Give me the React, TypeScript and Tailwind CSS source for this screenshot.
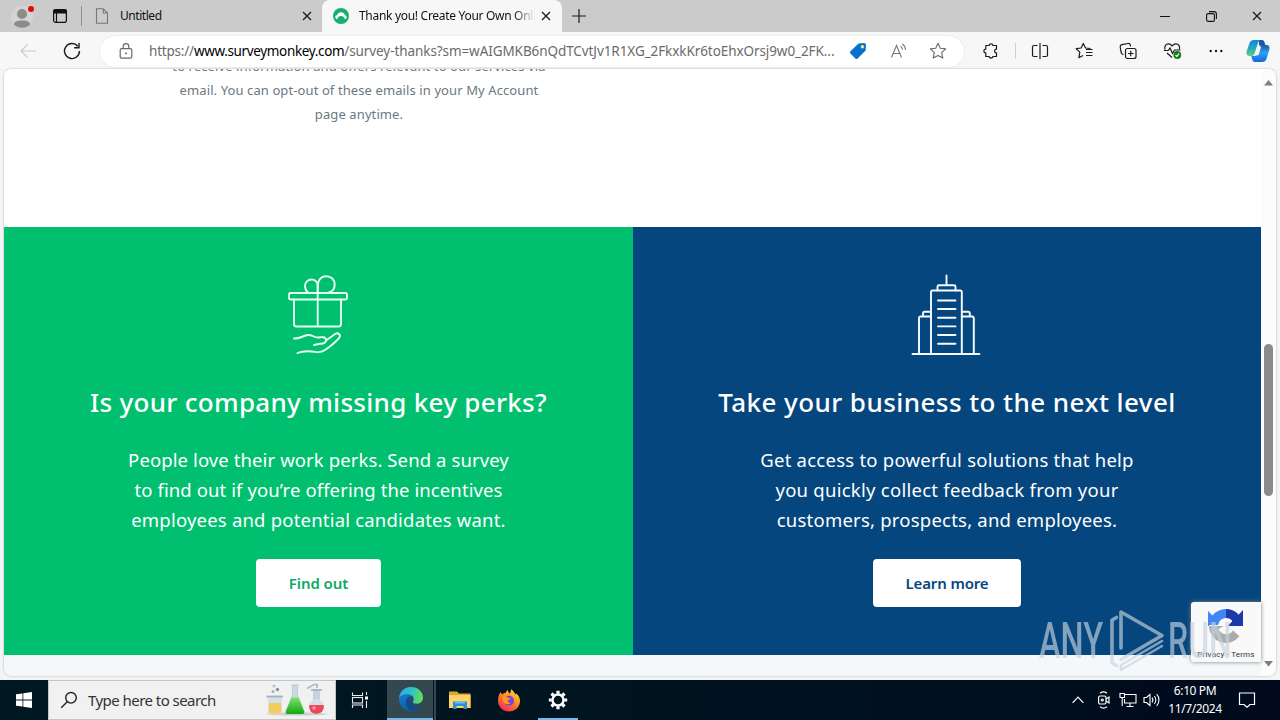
import React, { ReactNode } from 'react';

interface IconProps {
    className?: string;
}

/* ---------- Browser chrome icons ---------- */

const ProfileIcon = () => (
    <svg width="24" height="26" viewBox="0 0 24 26">
        <circle cx="12" cy="14" r="11" fill="#d4d4d4" />
        <circle cx="12" cy="11" r="5" fill="#8e8b88" />
        <path d="M4 21.500c0-3 3-4 8-4s8 1 8 4c-2 2.400-5 3.200-8 3.200s-6-.8-8-3.200z" fill="#8e8b88" />
        <circle cx="21" cy="6" r="3" fill="#e00b0b" />
    </svg>
);

const TabActionsIcon = () => (
    <svg width="16" height="16" viewBox="0 0 16 16" fill="none" stroke="#111" strokeWidth="1.200">
        <rect x="1.600" y="1.600" width="12.800" height="12.800" rx="2.200" />
        <path d="M2 2h12v3H2z" fill="#111" />
        <path d="M4.500 5v9" />
    </svg>
);

const PageIcon = () => (
    <svg width="14" height="16" viewBox="0 0 14 16" fill="none" stroke="#777" strokeWidth="1.100">
        <path d="M1.500.8h6.800l4.200 4.200v10.200h-11zM8.300.8V5h4.200" />
    </svg>
);

const CloseIcon = ({ className }: IconProps) => (
    <svg className={className} width="10" height="10" viewBox="0 0 10 10" stroke="#1b1b1b" strokeWidth="1.300">
        <path d="M1 1l8 8M9 1L1 9" />
    </svg>
);

const MonkeyIcon = () => (
    <svg width="16" height="16" viewBox="0 0 16 16">
        <circle cx="8" cy="8" r="8" fill="#13b36f" />
        <path d="M2.300 9.300C2.300 8 3 7.300 4 7.200 4.700 5.300 6.200 4.300 8 4.300s3.300 1 4 2.900c1 .1 1.700.8 1.700 2.100 0 1.100-.8 1.900-1.900 1.900C11.300 9 10 7.900 8 7.900S4.700 9 4.200 11.200c-1.100 0-1.900-.8-1.900-1.900z" fill="#fff" />
    </svg>
);

const BackIcon = () => (
    <svg width="18" height="16" viewBox="0 0 18 16" fill="none" stroke="#cacaca" strokeWidth="1.200">
        <path d="M17 8H2M8.500 1.500L2 8l6.500 6.500" />
    </svg>
);

const ReloadIcon = () => (
    <svg width="18" height="18" viewBox="0 0 18 18" fill="none" stroke="#1b1b1b" strokeWidth="1.400">
        <path d="M16.500 9A7.500 7.500 0 1 1 14.800 4.300M16 1v4.800h-4.800" />
    </svg>
);

const LockIcon = () => (
    <svg width="14" height="16" viewBox="0 0 14 16" fill="none" stroke="#6a6a6a" strokeWidth="1.200">
        <rect x="1.200" y="5.600" width="11.600" height="9.600" rx="1.500" />
        <path d="M4.200 5.600V3.500a2.800 2.800 0 0 1 5.600 0v2.100" />
        <circle cx="7" cy="10.400" r=".9" fill="#555" stroke="none" />
    </svg>
);

const TagIcon = () => (
    <svg width="18" height="18" viewBox="0 0 18 18">
        <path d="M9.500 1.500L15 1a2 2 0 0 1 2 2l-.4 5.500-8 8a1.600 1.600 0 0 1-2.200 0L1.500 11.500a1.600 1.600 0 0 1 0-2.200z" fill="#0a70d0" />
        <circle cx="13.400" cy="4.700" r="1.700" fill="#e8f08c" />
    </svg>
);

const ReadAloudIcon = () => (
    <svg width="18" height="16" viewBox="0 0 18 16" fill="none" stroke="#777" strokeWidth="1.100">
        <path d="M1.500 14.500L6.500 2.500l5 12M3.300 10.500h6.500" />
        <path d="M10.500 3.200c1.200.7 1.800 2 1.900 3.600M12.300 1c2 1.200 3.100 3.300 3.200 6" />
    </svg>
);

const StarIcon = () => (
    <svg width="18" height="18" viewBox="0 0 18 18" fill="none" stroke="#6a6a6a" strokeWidth="1.100" strokeLinejoin="round">
        <path d="M9 1.300l2.300 5 5.400.6-4 3.700 1.100 5.500L9 13.400l-4.800 2.700 1.100-5.500-4-3.700 5.400-.6z" />
    </svg>
);

const ExtensionIcon = () => (
    <svg width="18" height="18" viewBox="0 0 18 18" fill="none" stroke="#1b1b1b" strokeWidth="1.200" strokeLinejoin="round">
        <path d="M4.500 3.500h2.600a2 2 0 0 1 3.900 0h3.500v3.600a1.900 1.900 0 1 0 0 3.800v3.600H11a2 2 0 0 1-3.900 0H3.800v-3.600a1.900 1.900 0 0 1 0-3.800V3.500z" />
    </svg>
);

const SplitIcon = () => (
    <svg width="18" height="18" viewBox="0 0 18 18" fill="none" stroke="#1b1b1b" strokeWidth="1.200">
        <path d="M6.500 3.500H3a1.500 1.500 0 0 0-1.500 1.500v8A1.500 1.500 0 0 0 3 14.500h3.500M11.500 3.500H15A1.500 1.500 0 0 1 16.500 5v8a1.500 1.500 0 0 1-1.500 1.500h-3.500M9 1v16" />
    </svg>
);

const FavoritesIcon = () => (
    <svg width="18" height="18" viewBox="0 0 18 18" fill="none" stroke="#1b1b1b" strokeWidth="1.200" strokeLinejoin="round">
        <path d="M15.500 6.500l-5-.5L8.300 1.500 6.100 6l-4.900.7 3.600 3.400-.9 5.600L8 13.500" />
        <path d="M11 7.500h6.500M11 10.500h6.500M11 13.500h6.500" />
    </svg>
);

const CollectionsIcon = () => (
    <svg width="18" height="18" viewBox="0 0 18 18" fill="none" stroke="#1b1b1b" strokeWidth="1.200">
        <rect x="6.500" y="6.500" width="10.500" height="10" rx="2" />
        <path d="M11.750 8.700v5.600M9 11.500h5.500" />
        <path d="M4.500 12.500C3 12.500 2.500 11.700 2.200 10.500L1.200 5C1 3.700 1.600 3 2.800 2.700l6.200-1.200c1.300-.2 2 .3 2.300 1.500l.3 1.300" />
    </svg>
);

const HealthIcon = () => (
    <svg width="20" height="18" viewBox="0 0 20 18" fill="none" stroke="#1b1b1b" strokeWidth="1.200">
        <path d="M2 7.500C1 4 3 1.800 5.400 1.800c1.700 0 2.800.9 3.700 2.200 1-1.300 2.100-2.200 3.800-2.200 2.500 0 4.400 2.200 3.500 5.700M4 11l5 4.500" />
        <path d="M.8 8.500h4.500L7 6l2.500 5.500L11.500 8h6" />
        <circle cx="14.300" cy="13" r="3.900" fill="#177d1c" stroke="none" />
        <path d="M12.500 13.100l1.300 1.300 2.400-2.700" stroke="#fff" />
    </svg>
);

const DotsIcon = () => (
    <svg width="14" height="4" viewBox="0 0 14 4" fill="#1b1b1b">
        <circle cx="1.700" cy="2" r="1.200" />
        <circle cx="7" cy="2" r="1.200" />
        <circle cx="12.300" cy="2" r="1.200" />
    </svg>
);

const CopilotIcon = () => (
    <svg width="24" height="24" viewBox="0 0 24 24">
        <defs>
            <linearGradient id="cpLeft" x1="0" y1="0" x2="0" y2="1">
                <stop offset="0" stopColor="#1586d8" />
                <stop offset=".5" stopColor="#22a9bd" />
                <stop offset="1" stopColor="#5fd08c" />
            </linearGradient>
            <linearGradient id="cpRight" x1="0" y1="0" x2="0" y2="1">
                <stop offset="0" stopColor="#1b56a8" />
                <stop offset=".45" stopColor="#2aa5ee" />
                <stop offset="1" stopColor="#1767d8" />
            </linearGradient>
        </defs>
        <path d="M13 1h3c1.500 0 2.200 1 2.600 2.500L19.500 6.500H13z" fill="#1b56a8" />
        <path d="M8 1h7c-1.600.3-2.400 1.300-3 3l-3.500 10.500C7.900 16.200 7.200 17 5.500 17h-2C1 17 0 15 .6 12.500L3.500 4C4.300 2 5.600 1 8 1z" fill="url(#cpLeft)" />
        <path d="M16 23H9c-1.600 0-2.400-1-2.800-2.500L5.300 17h3c1.700 0 2.600-.8 3.100-2.500l2-6C13.900 6.800 14.800 6 16.500 6h4c2.500 0 3.500 2 2.900 4.500L20.500 20c-.7 2-2.100 3-4.500 3z" fill="url(#cpRight)" />
        <path d="M12.800 7.800h2.400l-2.800 8.400H9.800z" fill="#f4f8fb" />
    </svg>
);

/* ---------- Page illustrations ---------- */

const GiftIcon = () => (
    <svg width="64" height="84" viewBox="0 0 64 84" fill="none" stroke="#e8fff3" strokeWidth="1.900" strokeLinecap="round" strokeLinejoin="round">
        <rect x="3" y="19" width="58" height="6.500" rx="1.500" />
        <path d="M8 25.500V50a2.500 2.500 0 0 0 2.500 2.500h42A2.500 2.500 0 0 0 55 50V25.500" />
        <path d="M31.700 52V12" />
        <path d="M31.700 18.500V12c0-4-2.800-6.500-6.300-6.500S19 8.300 19 12c0 3 1.200 5.200 3 6.500" />
        <path d="M31.700 12c0-6 3.500-9.800 8.500-9.800s8.500 3.500 8.500 8.300c0 4-2.200 7-5.700 8" />
        <path d="M8 64.500c5 .5 9-2.700 14-3.500 4-.5 6.500 3 10.500 2.500 3-.5 7-1 7.500 2s-2.500 4.500-6 4.200l-6 1.300" />
        <path d="M40 66.500l9.500-6.700c2.500-1.600 5.500.7 4 3.500-1.300 2.500-9 9.200-14.500 12.700-3 2-6 2.400-9.500 1.900-6-1-12-1.500-18 1.100" />
    </svg>
);

const BuildingIcon = () => (
    <svg width="70" height="82" viewBox="0 0 70 82" fill="none" stroke="#f5fbff" strokeWidth="1.900" strokeLinecap="round" strokeLinejoin="round">
        <path d="M1.500 80h67" />
        <path d="M20 80V18a1.500 1.500 0 0 1 1.500-1.500h27.800A1.500 1.500 0 0 1 50.800 18v62" />
        <path d="M26.500 16.500v-3.800a1.500 1.500 0 0 1 1.500-1.500h15a1.500 1.500 0 0 1 1.500 1.500v3.800M35.500 11V1.500" />
        <path d="M8 80V44a1.500 1.500 0 0 1 1.500-1.500H20M12 42.500v-3.300a1.500 1.500 0 0 1 1.500-1.500H20" />
        <path d="M62.800 80V44a1.500 1.500 0 0 0-1.500-1.500H50.800M58.800 42.500v-3.300a1.500 1.500 0 0 0-1.500-1.500h-6.500" />
        <path d="M27 26.500h17.500M27 35h17.500M27 43.700h17.500M27 52.400h17.500M27 61h17.500M27 69.700h17.500" />
    </svg>
);

const RecaptchaIcon = () => (
    <svg width="40" height="40" viewBox="0 0 40 40">
        <path d="M37 20A17 17 0 0 0 20 3v9a8 8 0 0 1 6.500 3.300L22 20z" fill="#1c3aa9" />
        <path d="M37 4v16H22z" fill="#1c3aa9" />
        <path d="M20 3A17 17 0 0 0 6.500 9.500L2 5v15h1a17 17 0 0 1 .1-1h8.900a8 8 0 0 1 8-7z" fill="#4285f4" />
        <path d="M3 20a17 17 0 0 0 30.500 10.300L27 24.500A8.200 8.200 0 0 1 12.500 23l5-3z" fill="#ababab" />
    </svg>
);

const WatermarkPlay = () => (
    <svg width="56" height="64" viewBox="0 0 56 64" fill="none" stroke="#c6d4e0" strokeWidth="3.600" strokeLinejoin="round" strokeLinecap="round">
        <path d="M7.500 8.500L3 11v43l4.500 2.500" />
        <path d="M12 39V3l41 23.500L12 50.500" />
        <path d="M53 32L12 56v5l41-24" strokeWidth="2.600" />
    </svg>
);

/* ---------- Taskbar icons ---------- */

const WindowsIcon = () => (
    <svg width="16" height="16" viewBox="0 0 16 16" fill="#fff">
        <path d="M0 2.300l6.500-.9v6.200H0zM7.300 1.300L16 0v7.600H7.300zM0 8.400h6.500v6.200L0 13.700zM7.300 8.400H16V16l-8.700-1.300z" />
    </svg>
);

const SearchIcon = () => (
    <svg width="18" height="18" viewBox="0 0 18 18" fill="none" stroke="#222" strokeWidth="1.400">
        <circle cx="11" cy="6.800" r="5.300" />
        <path d="M7.300 10.800L1.200 16.800" />
    </svg>
);

const FlasksIcon = () => (
    <svg width="66" height="34" viewBox="0 0 66 34">
        <defs>
            <linearGradient id="flaskGreen" x1="0" y1="0" x2="0" y2="1">
                <stop offset="0" stopColor="#7be36a" />
                <stop offset="1" stopColor="#12a813" />
            </linearGradient>
        </defs>
        <ellipse cx="33" cy="31" rx="31" ry="1.500" fill="#cfcfcf" />
        <circle cx="10" cy="3" r="1.600" fill="#b9c3cf" />
        <circle cx="13.500" cy="6.500" r="1.700" fill="#7f92a8" />
        <circle cx="9" cy="8.500" r="1.500" fill="#9fb0c1" />
        <path d="M4 14h14v15a2 2 0 0 1-2 2H6a2 2 0 0 1-2-2z" fill="#d5e0e8" />
        <path d="M5 20h12v8.500a2 2 0 0 1-2 2H7a2 2 0 0 1-2-2z" fill="#f2cb58" />
        <path d="M2.500 13.500h16.500" stroke="#9fb2c2" strokeWidth="1.800" />
        <path d="M27 2h8M28.500 2.500v9.500L22 28a2 2 0 0 0 2 3h14a2 2 0 0 0 2-3L33.500 12V2.500z" fill="#cdd9e2" stroke="#b9c8d4" strokeWidth=".8" />
        <path d="M27.500 14.500h7L40 28a2 2 0 0 1-2 3H24a2 2 0 0 1-2-3z" fill="url(#flaskGreen)" />
        <path d="M43 5.500l7-4h3v3.500" fill="none" stroke="#a9bac8" strokeWidth="1.700" />
        <path d="M49 6h7v13h-7z" fill="#c6d3de" />
        <path d="M47 7h11" stroke="#9fb2c2" strokeWidth="1.600" />
        <circle cx="52.500" cy="23.500" r="7.500" fill="#d8dfe6" />
        <path d="M45.300 22h14.400a7.400 7.400 0 1 1-14.400 0z" fill="#e84a5c" />
        <circle cx="50" cy="25" r="1.800" fill="#f7959f" />
    </svg>
);

const TaskViewIcon = () => (
    <svg width="18" height="18" viewBox="0 0 18 18" fill="none" stroke="#e8eef0" strokeWidth="1.100">
        <path d="M1.500 1.500v3h10v-3M1.500 17v-3h10v3" />
        <rect x="1.500" y="6.500" width="10" height="5.500" />
        <path d="M15.500 1v3M15.500 10v7" />
        <path d="M14 5.500h3v3h-3z" fill="#fff" stroke="none" />
    </svg>
);

const EdgeIcon = () => (
    <svg width="26" height="26" viewBox="0 0 26 26">
        <defs>
            <linearGradient id="edgeTop" x1="0" y1="0.400" x2="1" y2="0.500">
                <stop offset="0" stopColor="#2aa8e6" />
                <stop offset=".55" stopColor="#33c4c4" />
                <stop offset="1" stopColor="#6be04b" />
            </linearGradient>
            <linearGradient id="edgeLow" x1="0" y1="0" x2="0.600" y2="1">
                <stop offset="0" stopColor="#1b84d6" />
                <stop offset="1" stopColor="#0c59a4" />
            </linearGradient>
        </defs>
        <path d="M13 1C6.300 1 1 6.200 1 13c0 7 5.500 12 12 12 4.200 0 8-2 9.800-5-5.500 2.500-11.300-.4-11-5.800.1-1.700 1-3.200 2-4z" fill="url(#edgeLow)" />
        <path d="M1 12C1.800 5.300 7 1 13 1c7 0 12 5 12 10.500 0 4-3 6.300-6.500 6.300-3 0-4.200-1.200-3.500-2.200 2-3-.3-7.300-5.300-7.300C5.500 8.300 2.300 9.600 1 12z" fill="url(#edgeTop)" />
        <path d="M8 16.500c0-3.700 2-5.700 4.800-6.200-2 3-1.700 9.500 6.500 10.700 1.300.1 2.500-.3 3.500-1-2 3.200-5.500 5-9 5-3.800-1-5.800-4.800-5.800-8.500z" fill="#114a8b" />
    </svg>
);

const FolderIcon = () => (
    <svg width="22" height="20" viewBox="0 0 22 20">
        <path d="M0 1.500h8l2 2h11.500V18H0z" fill="#e2a52b" />
        <path d="M0 5h21.500v13H0z" fill="#fcd566" />
        <path d="M4 19v-7.500h14V19h-3.500v-3h-7v3z" fill="#2f8fd6" />
        <path d="M6 11.500h10v2H6z" fill="#6cbdf0" />
    </svg>
);

const FirefoxIcon = () => (
    <svg width="24" height="24" viewBox="0 0 24 24">
        <defs>
            <linearGradient id="ffBody" x1="0.800" y1="0" x2="0.200" y2="1">
                <stop offset="0" stopColor="#ffe03a" />
                <stop offset=".45" stopColor="#ff8a1e" />
                <stop offset="1" stopColor="#f0205e" />
            </linearGradient>
        </defs>
        <path d="M3.500 4l1.500 2.500C6 5.500 7 5 8.500 5 9 3.500 10 2.500 11 2c-.2 1.500.5 3 2 3.500L14.500 1c1 1.500 3 3.300 4 5.500l1-1C22 8 23.200 10.500 23 13.500 22.600 19.300 18 23.500 12 23.500S1 18.800 1 13C1 9.300 1.800 6.500 3.500 4z" fill="url(#ffBody)" />
        <circle cx="12" cy="12.800" r="5" fill="#7542e5" />
        <path d="M5.500 8.500c2-.8 4-.3 5.500 1.200l3 .5c-.4 1.300-2.200 1.500-3 2-.5 1.200.5 2.800 2.500 2.800-2 2.500-7 1.500-7.500-2.500z" fill="#ff9420" />
    </svg>
);

const GearIcon = () => (
    <svg width="20" height="20" viewBox="-10 -10 20 20" fill="none" stroke="#fff">
        <circle r="5.500" strokeWidth="2.400" />
        <path d="M0-9.200v3M0 6.200v3M-9.200 0h3M6.200 0h3M-6.500-6.500l2.100 2.100M4.400 4.400l2.100 2.100M6.500-6.500L4.400-4.400M-4.400 4.400l-2.100 2.100" strokeWidth="3.200" />
    </svg>
);

const TrayIcons = () => (
    <>
        <svg width="12" height="8" viewBox="0 0 12 8" fill="none" stroke="#fff" strokeWidth="1.200">
            <path d="M.6 6.800L6 1.200l5.400 5.600" />
        </svg>
        <svg className="ml-[13px]" width="14" height="18" viewBox="0 0 14 18" fill="none" stroke="#fff" strokeWidth="1.200">
            <rect x="1.600" y="5" width="7.400" height="8" rx="1.500" />
            <path d="M9 8l3-2v6l-3-2M3 2.300c2-1.500 5-1.500 7 0M3 15.700c2 1.500 5 1.500 7 0" />
            <circle cx="5.300" cy="9" r="1" />
        </svg>
        <svg className="ml-[8px]" width="18" height="16" viewBox="0 0 18 16" fill="none" stroke="#fff" strokeWidth="1.100">
            <path d="M6 2.500h11v8.500H5.500V7M11 11v3M7.500 14.500h7" />
            <path d="M1 1.500h4.500v4H1zM3.200 5.500V14" />
        </svg>
        <svg className="ml-[6px]" width="18" height="16" viewBox="0 0 18 16" fill="none" stroke="#fff" strokeWidth="1.100">
            <path d="M1 5.500h2.500L7 2.500v11l-3.500-3H1z" />
            <path d="M9 5.700c1 1.300 1 3.300 0 4.600M11.300 4c2 2.200 2 5.800 0 8M13.700 2.200c3 3.200 3 8.400 0 11.600" />
        </svg>
    </>
);

/* ---------- Sections ---------- */

const TitleBar = () => (
    <div className="flex h-8 items-stretch bg-[#cbcbcb] font-['Noto_Sans','Open_Sans',sans-serif] text-[12px] text-[#111]">
        <div className="flex w-[86px] items-center pl-[10px]">
            <ProfileIcon />
            <span className="ml-[18px]">
                <TabActionsIcon />
            </span>
            <span className="ml-[13px] h-5 w-px shrink-0 bg-[#8f8f8f]" />
        </div>
        <div className="flex w-[236px] items-center pl-[9px]">
            <PageIcon />
            <span className="ml-[11px] tracking-[-0.45px]">Untitled</span>
            <CloseIcon className="mr-[10px] ml-auto" />
        </div>
        <div className="flex w-[240px] items-center rounded-t-lg bg-[#f7f7f7] pl-[11px]">
            <MonkeyIcon />
            <span className="ml-[10px] w-[176px] overflow-hidden whitespace-nowrap tracking-[-0.3px] [mask-image:linear-gradient(to_right,black_88%,transparent)]">
                Thank you! Create Your Own Onli
            </span>
            <CloseIcon className="ml-[6px]" />
        </div>
        <svg className="mt-[9px] ml-[10px]" width="14" height="14" viewBox="0 0 14 14" stroke="#1b1b1b" strokeWidth="1.200">
            <path d="M7 0v14M0 7h14" />
        </svg>
        <div className="ml-auto flex items-center pr-[18px]">
            <span className="h-px w-[10px] bg-[#111]" />
            <svg className="ml-[36px]" width="11" height="11" viewBox="0 0 11 11" fill="none" stroke="#111" strokeWidth="1.100">
                <rect x=".6" y="2.600" width="7.800" height="7.800" rx="1.500" />
                <path d="M3 .6h5a2.400 2.400 0 0 1 2.400 2.400v5" />
            </svg>
            <CloseIcon className="ml-[35px]" />
        </div>
    </div>
);

const ToolBar = () => (
    <div className="flex h-[37px] items-center bg-[#f7f7f7] pt-px font-['Noto_Sans','Open_Sans',sans-serif]">
        <span className="ml-[19px]">
            <BackIcon />
        </span>
        <span className="ml-[26px]">
            <ReloadIcon />
        </span>
        <div className="ml-[19px] flex h-[31px] w-[864px] items-center rounded-full bg-white pl-[19px] shadow-[0_0_2px_rgba(0,0,0,0.12)]">
            <LockIcon />
            <span className="ml-[16px] w-[688px] whitespace-nowrap text-[13.500px] text-[#6b6b6b]">
                <span className="tracking-[-0.2px]">https://</span>
                <span className="tracking-[-0.35px] text-black">www.surveymonkey.com</span>
                <span className="tracking-[-0.08px]">/survey-thanks?sm=wAIGMKB6nQdTCvtJv1R1XG_2FkxkKr6toEhxOrsj9w0_2FK...</span>
            </span>
            <span className="ml-[12px]">
                <TagIcon />
            </span>
            <span className="ml-[23px]">
                <ReadAloudIcon />
            </span>
            <span className="ml-[21px]">
                <StarIcon />
            </span>
        </div>
        <span className="ml-[18px]">
            <ExtensionIcon />
        </span>
        <span className="ml-[15px] h-4 w-px bg-[#cfcfcf]" />
        <span className="ml-[15px]">
            <SplitIcon />
        </span>
        <span className="ml-[26px]">
            <FavoritesIcon />
        </span>
        <span className="ml-[26px]">
            <CollectionsIcon />
        </span>
        <span className="ml-[26px]">
            <HealthIcon />
        </span>
        <span className="ml-[26px]">
            <DotsIcon />
        </span>
        <span className="ml-[23px]">
            <CopilotIcon />
        </span>
    </div>
);

interface PromoProps {
    className: string;
    icon: ReactNode;
    title: ReactNode;
    children: ReactNode;
    action: ReactNode;
}

const Promo = ({ className, icon, title, children, action }: PromoProps) => (
    <section className={`flex h-[428px] flex-col items-center text-white ${className}`}>
        <div className="mt-[47px] mr-[2px] h-[84px]">{icon}</div>
        <h2 className="mt-[25px] text-[26px] leading-[38px] font-medium whitespace-nowrap">{title}</h2>
        <div className="mt-[24px] flex flex-col items-center text-[18.500px] leading-[30px] whitespace-nowrap">{children}</div>
        {action}
    </section>
);

const ScrollBar = () => (
    <div className="flex w-[15px] shrink-0 flex-col items-center bg-[#fcfcfc]">
        <svg className="mt-[11px]" width="9" height="6" viewBox="0 0 9 6" fill="#7f7f7f">
            <path d="M4.500 0L9 5.500H0z" />
        </svg>
        <span className="mt-[258px] h-[152px] w-[9px] rounded-full bg-[#8b8b8b]" />
        <svg className="mt-[165px]" width="9" height="6" viewBox="0 0 9 6" fill="#7f7f7f">
            <path d="M4.500 5.500L9 0H0z" />
        </svg>
    </div>
);

const WebPage = () => (
    <div className="mx-[4px] flex h-[607px] overflow-hidden rounded-lg bg-white font-['Noto_Sans',sans-serif] shadow-[0_0_2px_rgba(0,0,0,0.35)]">
        <div className="flex w-[1257px] flex-col bg-[#f5f8fa]">
            <div className="h-[158px] overflow-hidden bg-white">
                <div className="-mt-[15px] ml-[165px] flex w-[380px] flex-col items-center text-[13px] leading-6 tracking-[0.1px] whitespace-nowrap text-[#6b787f]">
                    <p>to receive information and offers relevant to our services via</p>
                    <p>email. You can opt-out of these emails in your My Account</p>
                    <p>page anytime.</p>
                </div>
            </div>
            <div className="flex">
                <Promo
                    className="w-[629px] bg-[#00bf6f]"
                    icon={<GiftIcon />}
                    title={<span className="tracking-[0.3px]">Is your company missing key perks?</span>}
                    action={
                        <button className="mt-[24px] h-12 w-[125px] rounded bg-white text-[15px] font-semibold tracking-[-0.1px] text-[#0fa868]">
                            Find out
                        </button>
                    }
                >
                    <p className="tracking-[0.1px]">People love their work perks. Send a survey</p>
                    <p className="tracking-[0.1px]">to find out if you’re offering the incentives</p>
                    <p className="tracking-[0.2px]">employees and potential candidates want.</p>
                </Promo>
                <Promo
                    className="w-[628px] bg-[#05467e]"
                    icon={<BuildingIcon />}
                    title={<span className="tracking-[0.44px]">Take your business to the next level</span>}
                    action={
                        <button className="mt-[24px] h-12 w-[148px] rounded bg-white text-[15px] font-semibold tracking-[-0.15px] text-[#05467e]">
                            Learn more
                        </button>
                    }
                >
                    <p className="tracking-[0.24px]">Get access to powerful solutions that help</p>
                    <p className="tracking-[0.26px]">you quickly collect feedback from your</p>
                    <p className="tracking-[0.22px]">customers, prospects, and employees.</p>
                </Promo>
            </div>
        </div>
        <ScrollBar />
    </div>
);

const Recaptcha = () => (
    <div className="absolute top-[602px] left-[1191px] flex h-[60px] w-[70px] flex-col items-center rounded-l-[3px] bg-[#f9f9f9] pt-[4px] font-['Roboto',sans-serif] shadow-[0_0_4px_#808080]">
        <RecaptchaIcon />
        <span className="mt-[4px] text-[8px] leading-[10px] tracking-[0.2px] whitespace-nowrap text-[#333]">Privacy - Terms</span>
    </div>
);

const Watermark = () => (
    <div className="absolute top-[608px] left-[1039px] flex h-[66px] items-center font-['Roboto',sans-serif] text-[50px] leading-none text-[#c6d4e0] opacity-65">
        <span className="w-[70px] origin-left scale-x-[0.65] font-medium">ANY</span>
        <WatermarkPlay />
        <span className="ml-[3px] w-[60px] origin-left scale-x-[0.64] font-medium">RUN</span>
    </div>
);

const TaskBar = () => (
    <div className="flex h-10 items-stretch bg-linear-to-r from-[#001820] via-[#001420] to-[#000a1c] font-['Noto_Sans','Open_Sans',sans-serif]">
        <div className="flex w-12 items-center justify-center">
            <WindowsIcon />
        </div>
        <div className="flex w-[288px] items-center border border-[#c5c5c5] bg-[#f1f1f1] pl-[11px]">
            <SearchIcon />
            <span className="ml-[10px] text-[15px] tracking-[-0.55px] text-[#333]">Type here to search</span>
            <span className="mr-[5px] ml-auto">
                <FlasksIcon />
            </span>
        </div>
        <div className="flex w-[51px] items-center justify-center pr-[4px]">
            <TaskViewIcon />
        </div>
        <div className="mr-px flex w-[46px] items-center justify-center border-b-2 border-[#76b9ed] bg-[#33484f] pl-[2px]">
            <EdgeIcon />
        </div>
        <div className="flex w-[51px] items-center justify-center border-l-2 border-[#33484f] pr-[2px]">
            <FolderIcon />
        </div>
        <div className="flex w-[53px] items-center justify-center pr-[5px]">
            <FirefoxIcon />
        </div>
        <div className="flex w-[40px] items-center justify-center border-b-2 border-[#76b9ed] pt-px">
            <GearIcon />
        </div>
        <div className="ml-auto flex items-center">
            <TrayIcons />
            <div className="ml-[-1px] w-[70px] text-center text-[12px] leading-[18px] tracking-[-0.4px] whitespace-nowrap text-white">
                <p>6:10 PM</p>
                <p>11/7/2024</p>
            </div>
            <svg className="mr-[24px] ml-[8px]" width="18" height="16" viewBox="0 0 18 16" fill="none" stroke="#fff" strokeWidth="1.200">
                <path d="M1.500 1h15v11.500H12l-3 2.800-3-2.800H1.500z" />
            </svg>
        </div>
    </div>
);

export default function App() {
    return (
        <div className="relative h-[720px] w-[1280px] overflow-hidden bg-[#f3f4f5]">
            <TitleBar />
            <ToolBar />
            <WebPage />
            <div className="h-[4px]" />
            <TaskBar />
            <Recaptcha />
            <Watermark />
        </div>
    );
}
